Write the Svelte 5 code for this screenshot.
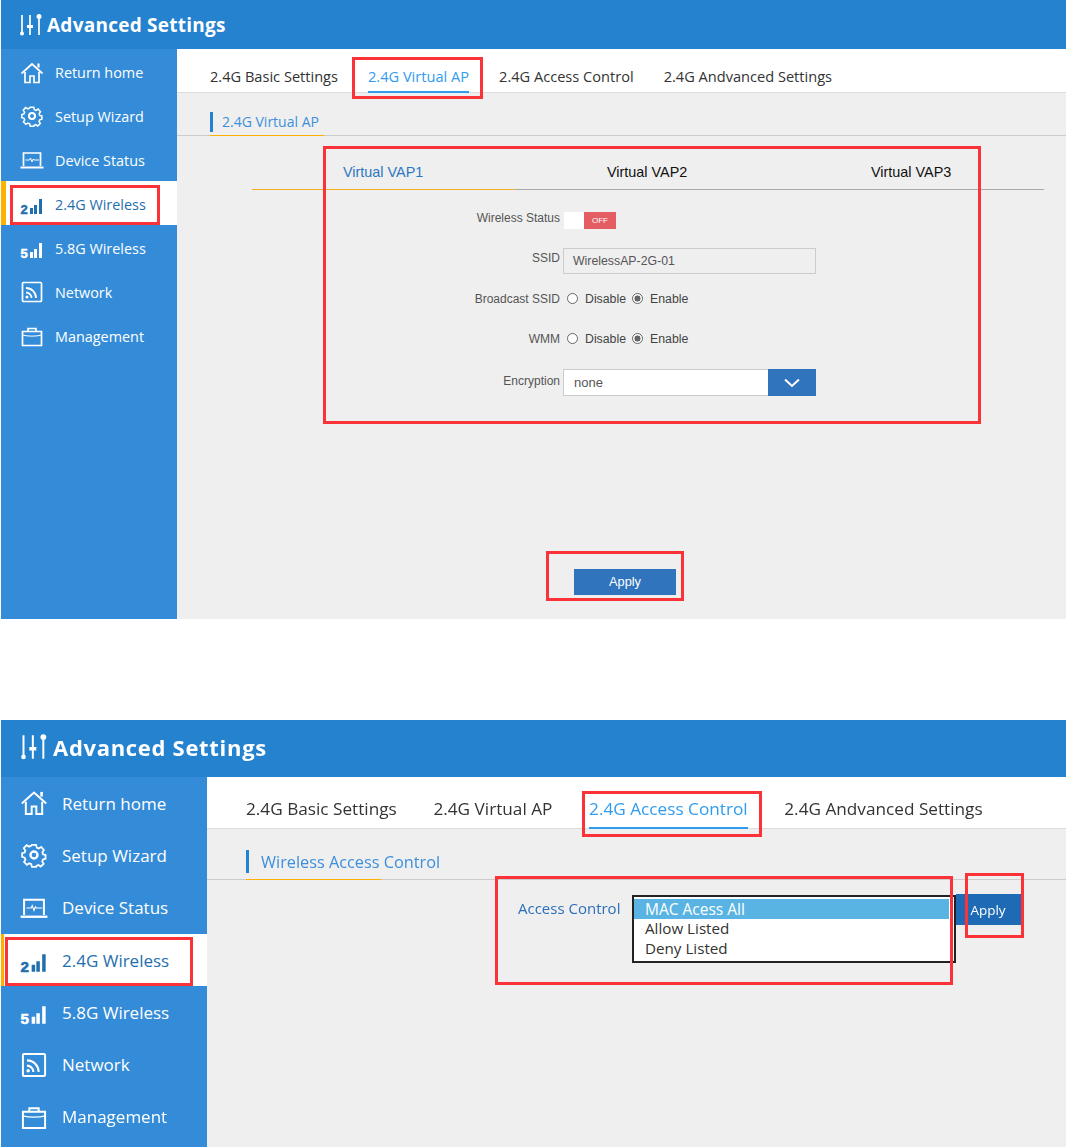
<script>
  const nav = [
    { id: 'home', label: 'Return home' },
    { id: 'gear', label: 'Setup Wizard' },
    { id: 'status', label: 'Device Status' },
    { id: 's24', label: '2.4G Wireless', active: true },
    { id: 's58', label: '5.8G Wireless' },
    { id: 'net', label: 'Network' },
    { id: 'mgmt', label: 'Management' }
  ];
  const tabs = ['2.4G Basic Settings', '2.4G Virtual AP', '2.4G Access Control', '2.4G Andvanced Settings'];
</script>

{#snippet icon(id)}
  <svg class="ico" viewBox="0 0 24 24" fill="none" stroke="currentColor" stroke-width="1.7" aria-hidden="true">
    {#if id === 'home'}
      <path d="M1.500 12.500 12 3l10.500 9.500" />
      <path d="M5 11v10.500h5v-6.500h4v6.500h5V11" />
      <path d="M18.500 2.500v4" stroke-width="2.200" />
    {:else if id === 'gear'}
      <circle cx="12" cy="12" r="3" stroke-width="2" />
      <path d="M10 3h4l.6 2.600 1.900.8 2.300-1.400 2.600 2.900-1.400 2.200.6 1.900 2.400.7v3.500l-2.400.7-.8 1.900 1.400 2.200-2.800 2.700-2.200-1.400-1.900.8L14 24h-4l-.6-2.600-1.900-.8-2.200 1.400-2.800-2.700 1.400-2.200-.8-1.900L.7 14.500V11l2.400-.7.6-1.900-1.400-2.200L5 3.300l2.300 1.400 1.900-.8Z" transform="translate(1.200 .6) scale(.9)" />
    {:else if id === 'status'}
      <path d="M3.500 18V5h17v13" />
      <path d="M.5 19.500h23" stroke-width="2" />
      <path d="M5.500 12h4l1-2 1.500 4 1.200-3 .8 1h5" stroke-width="1" />
    {:else if id === 's24' || id === 's58'}
      <text class="sig" x="0.500" y="22">{id === 's24' ? '2' : '5'}</text>
      <path d="M11.500 22v-6M15.500 22v-9M20.500 22V7" stroke-width="3" />
    {:else if id === 'net'}
      <rect x="2.500" y="2.500" width="19" height="19" rx="1" />
      <path d="M6 8c5.500 0 10 4.500 10 10M6 12.500c3 0 5.500 2.500 5.500 5.500" stroke-width="1.800" />
      <circle cx="7" cy="17" r="1.500" fill="currentColor" stroke="none" />
    {:else}
      <path d="M2.500 7.500h19v14h-19Z" />
      <path d="M8 7.500V4.500h8v3" />
      <path d="M2.500 11c5 1.500 14 1.500 19 0" stroke-width="1" />
    {/if}
  </svg>
{/snippet}

{#snippet chrome()}
  <header class="top">
    <svg class="logo" viewBox="0 0 24 24" fill="none" stroke="currentColor" stroke-width="1.700" aria-hidden="true">
      <path d="M3 2v18M11 2v20M20 6v16" />
      <circle cx="3" cy="20.500" r="2" fill="currentColor" stroke="none" />
      <path d="M8 13.500h6" stroke-width="3" />
      <circle cx="20" cy="3.500" r="2.500" fill="currentColor" stroke="none" />
    </svg>
    <span>Advanced Settings</span>
  </header>
{/snippet}

{#snippet side()}
  <nav class="side">
    {#each nav as n}
      <div class="item" class:on={n.active}>
        {@render icon(n.id)}
        <span>{n.label}</span>
      </div>
    {/each}
  </nav>
{/snippet}

{#snippet tabbar(current)}
  <div class="tabs">
    {#each tabs as t}
      <div class="tab" class:cur={t === current}>{t}</div>
    {/each}
  </div>
{/snippet}

{#snippet radios(cls)}
  <div class="radios {cls}">
    <i class="radio"></i><span>Disable</span>
    <i class="radio chk"></i><span>Enable</span>
  </div>
{/snippet}

<div class="page">
  <section class="shot a">
    {@render chrome()}
    <div class="body">
      {@render side()}
      <main class="main">
        {@render tabbar('2.4G Virtual AP')}
        <div class="sec"><div class="sec-t">2.4G Virtual AP</div></div>
        <div class="vaps">
          <div class="vap first">Virtual VAP1</div>
          <div class="vap">Virtual VAP2</div>
          <div class="vap">Virtual VAP3</div>
        </div>
        <div class="form">
          <div class="lab l-status">Wireless Status</div>
          <div class="toggle"><b></b><em>OFF</em></div>
          <div class="lab l-ssid">SSID</div>
          <div class="input">WirelessAP-2G-01</div>
          <div class="lab l-radio">Broadcast SSID</div>
          {@render radios('r1')}
          <div class="lab l-radio l-wmm">WMM</div>
          {@render radios('r2')}
          <div class="lab l-enc">Encryption</div>
          <div class="sel">
            <span>none</span>
            <b><svg viewBox="0 0 16 10" width="16" height="10" fill="none" stroke="#fff" stroke-width="2"><path d="M1 1.500l7 6.500 7-6.500" /></svg></b>
          </div>
        </div>
        <div class="act"><button class="apply">Apply</button></div>
      </main>
    </div>
    <div class="mark m1"></div>
    <div class="mark m2"></div>
    <div class="mark m3"></div>
    <div class="mark m4"></div>
  </section>

  <section class="shot b">
    {@render chrome()}
    <div class="body">
      {@render side()}
      <main class="main">
        {@render tabbar('2.4G Access Control')}
        <div class="sec"><div class="sec-t">Wireless Access Control</div></div>
        <div class="ac">
          <div class="ac-l">Access Control</div>
          <div class="list">
            <div class="opt sel-opt">MAC Acess All</div>
            <div class="opt">Allow Listed</div>
            <div class="opt">Deny Listed</div>
          </div>
          <button class="apply2">Apply</button>
        </div>
      </main>
    </div>
    <div class="mark n1"></div>
    <div class="mark n2"></div>
    <div class="mark n3"></div>
    <div class="mark n4"></div>
  </section>
</div>

<style>
  :global(body) { margin: 0; background: #fff; }
  .page { width: 1066px; height: 1147px; overflow: hidden; font-family: "Open Sans", "Noto Sans", sans-serif; }
  .shot { position: relative; margin-left: 1px; width: 1065px; background: #efefef; }
  .shot.a { height: 619px; margin-bottom: 101px; }
  .shot.b { height: 427px; }
  .b .top, .b .body { filter: blur(.3px); }

  .top { display: flex; align-items: center; background: #2482cf; color: #fff; font-weight: 700; box-sizing: border-box; }
  .logo { display: block; flex: none; }
  .a .top { height: 49px; padding-left: 18px; font-size: 19px; letter-spacing: .25px; }
  .a .logo { width: 24px; height: 24px; margin-right: 4px; }
  .b .top { height: 57px; padding: 0 0 4px 19px; font-size: 22px; letter-spacing: .7px; }
  .b .logo { width: 28px; height: 28px; margin-right: 5px; }

  .body { display: flex; }
  .side { flex: none; background: #348cd8; color: #fff; }
  .a .side { width: 176px; height: 570px; padding-top: 1px; box-sizing: border-box; }
  .b .side { width: 206px; height: 370px; }
  .item { display: flex; align-items: center; box-sizing: border-box; }
  .a .item { height: 44px; padding: 2px 0 0 19px; font-size: 14.4px; }
  .a .item:first-child { height: 43px; }
  .a .ico { width: 24px; height: 24px; margin-right: 11px; }
  .b .item { height: 52.300px; padding-left: 19px; font-size: 17px; }
  .b .ico { width: 28px; height: 28px; margin-right: 14px; }
  .ico { display: block; flex: none; }
  .sig { font: 700 13px "Liberation Sans", sans-serif; fill: currentColor; stroke: currentColor; stroke-width: .5px; }
  .item.on { background: #fff; color: #1f6fae; border-left: 5px solid #fdb100; }
  .a .item.on { padding-left: 14px; }
  .b .item.on { border-left-width: 3px; padding-left: 16px; }

  .main { flex: 1; min-width: 0; }
  .tabs { display: flex; background: #fff; border-bottom: 1px solid #ddd; color: #333; }
  .a .tabs { height: 43px; padding-left: 33px; gap: 30px; font-size: 14.6px; }
  .b .tabs { height: 51px; padding-left: 39px; gap: 36.700px; font-size: 17.200px; }
  .tab { position: relative; display: flex; align-items: center; height: 100%; box-sizing: border-box; }
  .a .tab { padding-top: 10px; }
  .b .tab { padding-top: 11px; }
  .tab.cur { color: #2f9cf0; }
  .tab.cur::after { content: ""; position: absolute; left: 0; right: 0; bottom: -1px; height: 2px; background: #2f9cf0; }

  .sec { display: flex; border-bottom: 1px solid #ccc; color: #3d8fdc; }
  .sec-t { position: relative; box-sizing: border-box; white-space: nowrap; }
  .sec-t::before { content: ""; position: absolute; left: 0; top: 0; width: 3px; background: #2482cf; }
  .sec-t::after { content: ""; position: absolute; left: 0; right: 0; bottom: -1px; height: 1px; background: #fdb100; }
  .a .sec { padding: 19px 0 0 33px; }
  .a .sec-t { height: 23px; width: 114px; padding-left: 12px; font-size: 14px; line-height: 20px; }
  .a .sec-t::before { height: 20px; }
  .b .sec { padding: 21px 0 0 39px; }
  .b .sec-t { height: 29px; width: 135px; padding-left: 15px; font-size: 16.300px; line-height: 24px; }
  .b .sec-t::before { height: 23px; }

  .vaps { position: relative; display: grid; grid-template-columns: repeat(3, 264px); height: 54px; margin: 0 22px 0 75px; border-bottom: 1px solid #aaa; box-sizing: border-box; font: 14.400px/34px "Liberation Sans", sans-serif; color: #111; }
  .vaps::after { content: ""; position: absolute; left: 0; width: 263px; bottom: -1px; height: 1px; background: #f0b020; }
  .vap { padding: 19px 0 0 91px; white-space: nowrap; }
  .vap.first { color: #2c78c0; }

  .form { display: grid; grid-template-columns: 383px 253px; column-gap: 3px; margin-top: 22px; font: 12.300px/18px "Liberation Sans", sans-serif; color: #555; }
  .lab { text-align: right; font-size: 12px; }
  .l-status { height: 36px; line-height: 13px; }
  .toggle { display: flex; height: 17px; margin: 0 0 19px 1px; }
  .toggle b { width: 20px; background: #fff; }
  .toggle em { width: 32px; background: #e35d63; color: #fff; font: 8px/17px "Liberation Sans", sans-serif; text-align: center; }
  .l-ssid { line-height: 20px; }
  .input { box-sizing: border-box; height: 26px; border: 1px solid #ccc; padding-left: 9px; line-height: 24px; }
  .l-radio { margin-top: 16px; }
  .lab.l-wmm { margin-top: 22px; }
  .radios { display: flex; align-items: center; height: 18px; color: #444; }
  .r1 { margin-top: 16px; }
  .r2 { margin-top: 22px; }
  .radio { box-sizing: border-box; width: 11px; height: 11px; margin: -2px 7px 0 4px; border: 1px solid #666; border-radius: 50%; background: #fff; }
  .radio.chk { margin-left: 6px; background: radial-gradient(circle, #666 0 2.800px, #fff 3.300px); }
  .l-enc { margin-top: 21px; line-height: 24px; }
  .sel { box-sizing: border-box; display: flex; justify-content: space-between; height: 27px; margin-top: 21px; background: #fff; border: 1px solid #ccc; border-right: 0; padding-left: 10px; font-size: 13px; line-height: 26px; }
  .sel b { display: flex; align-items: center; justify-content: center; width: 48px; height: 27px; margin-top: -1px; background: #2f74bd; }

  .act { display: flex; margin: 173px 0 0 397px; }
  .apply { width: 102px; height: 26px; border: 0; padding: 0 0 2px; background: #2f74bd; color: #fff; font: 12.800px "Liberation Sans", sans-serif; }

  .ac { display: flex; margin-top: 14px; align-items: flex-start; }
  .ac-l { margin: 4px 0 0 311px; width: 114px; font-size: 15px; line-height: 20px; color: #2c6fb8; white-space: nowrap; }
  .list { position: relative; z-index: 1; box-sizing: border-box; width: 324px; height: 68px; margin-top: 1px; border: 2px solid #222; padding-top: 2px; background: #fff; font-size: 15.200px; line-height: 18px; color: #333; }
  .opt { padding-left: 11px; height: 20px; }
  .sel-opt { margin-right: 5px; background: #5ab4e3; color: #fff; font-size: 15.500px; line-height: 21px; }
  .apply2 { width: 66px; height: 31px; border: 0; padding: 0 2px 0 0; background: #1f6ab4; color: #fff; font: 13.500px "Open Sans", sans-serif; }

  .mark { position: absolute; box-sizing: border-box; border: 3px solid #fb3338; pointer-events: none; z-index: 2; }
  .m1 { left: 9px; top: 185px; width: 150px; height: 40px; }
  .m2 { left: 351px; top: 57px; width: 131px; height: 42px; }
  .m3 { left: 322px; top: 146px; width: 658px; height: 278px; }
  .m4 { left: 545px; top: 551px; width: 138px; height: 50px; }
  .n1 { left: 4px; top: 217px; width: 188px; height: 49px; }
  .n2 { left: 581px; top: 71px; width: 180px; height: 46px; }
  .n3 { left: 494px; top: 156px; width: 458px; height: 109px; }
  .n4 { left: 964px; top: 153px; width: 59px; height: 65px; }
</style>
